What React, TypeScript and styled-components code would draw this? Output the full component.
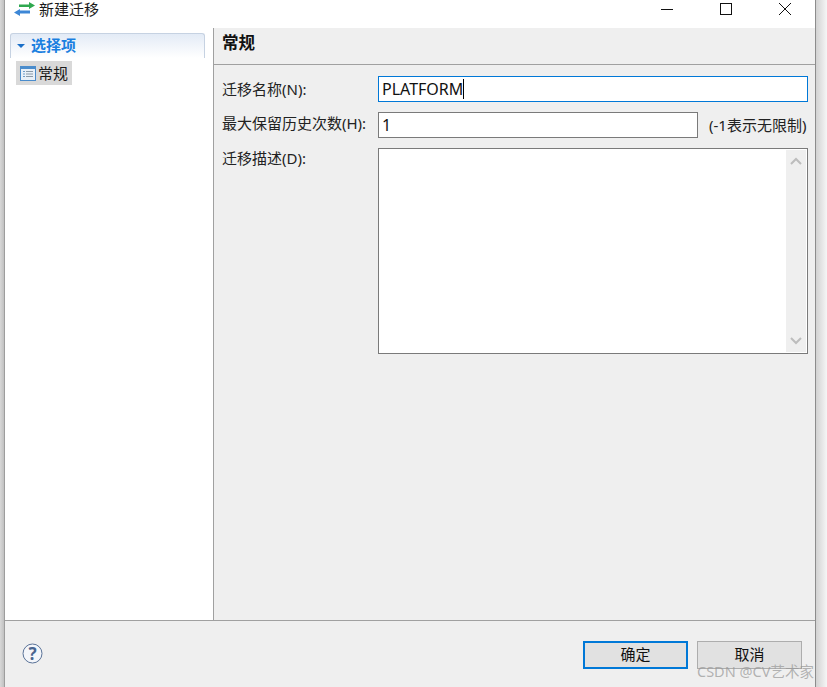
import styled, { createGlobalStyle } from "styled-components";

const fontStack = `"Noto Sans", "Noto Sans CJK SC", sans-serif`;

const GlobalStyle = createGlobalStyle`
	html, body {
		margin: 0;
		padding: 0;
		background: #fff;
	}
	* {
		box-sizing: border-box;
	}
`;

const Screen = styled.div`
	position: relative;
	width: 827px;
	height: 687px;
	overflow: hidden;
	display: flex;
	font-family: ${fontStack};
	font-size: 15px;
	color: #1a1a1a;
	background: #fff;
`;

const LeftEdge = styled.div`
	width: 5px;
	background: linear-gradient(to right, #d8d8d8, #c4c4c4 70%, #8a8a8a);
`;

const RightEdge = styled.div`
	width: 12px;
	background: linear-gradient(to right, #8c8c8c 0, #8c8c8c 1px, #d2d2d2 1px, #e6e6e6 60%, #f6f6f6);
`;

const Window = styled.div`
	flex: 1;
	display: flex;
	flex-direction: column;
	min-width: 0;
`;

const TitleBar = styled.div`
	height: 28px;
	display: flex;
	align-items: flex-start;
	background: #fff;
`;

const AppIcon = styled.svg`
	width: 21px;
	height: 14px;
	margin: 2px 0 0 9px;
`;

const Title = styled.span`
	margin: 0 0 0 4px;
	font-size: 15px;
	line-height: 18px;
`;

const WindowButtons = styled.div`
	margin-left: auto;
	display: flex;
	align-items: center;
	height: 18px;
`;

const WindowButton = styled.svg`
	width: 14px;
	height: 14px;
	margin-right: 45px;
	&:last-child {
		margin-right: 23px;
	}
`;

const Body = styled.div`
	flex: 1;
	display: flex;
	min-height: 0;
`;

const Sidebar = styled.aside`
	width: 209px;
	background: #fff;
	border-right: 1px solid #a0a0a0;
	padding: 5px 8px 0 5px;
`;

const SectionHeader = styled.div`
	height: 25px;
	display: flex;
	align-items: center;
	padding-bottom: 2px;
	border: 1px solid #c6d2e2;
	border-bottom: none;
	border-radius: 3px 3px 0 0;
	background: linear-gradient(to bottom, #e3ebf6, #ffffff);
	font-weight: 700;
	color: #1a7fe0;
	font-size: 15px;
	line-height: 22px;
`;

const Caret = styled.span`
	width: 0;
	height: 0;
	margin: 1px 6px 0 6px;
	border-left: 4px solid transparent;
	border-right: 4px solid transparent;
	border-top: 4px solid #1a6fc8;
`;

const TreeItem = styled.div`
	display: inline-flex;
	align-items: center;
	height: 24px;
	margin: 3px 0 0 6px;
	padding: 0 4px 0 4px;
	gap: 2px;
	background: #d9d9d9;
	font-size: 15px;
	line-height: 24px;
`;

const Main = styled.main`
	flex: 1;
	display: flex;
	flex-direction: column;
	background: #efefef;
	min-width: 0;
`;

const PageHeader = styled.div`
	height: 37px;
	padding: 4px 8px 0;
	border-bottom: 1px solid #a0a0a0;
	font-size: 16.5px;
	font-weight: 700;
	line-height: 22px;
	color: #111;
`;

const Form = styled.div`
	padding: 11px 7px 0 8px;
	display: flex;
	flex-direction: column;
	gap: 10px;
`;

const Row = styled.div`
	display: flex;
	align-items: flex-start;
`;

const Label = styled.label<{ $nudge?: number }>`
	width: 156px;
	flex: none;
	margin-top: ${(p) => p.$nudge ?? 0}px;
	line-height: 26px;
	font-size: 15px;
	color: #222;
	white-space: nowrap;
`;

const Field = styled.div<{ $focused?: boolean; $width: number }>`
	width: ${(p) => p.$width}px;
	height: 26px;
	flex: none;
	display: flex;
	align-items: center;
	padding-left: 3px;
	background: #fff;
	border: 1px solid ${(p) => (p.$focused ? "#0078d7" : "#7a7a7a")};
	font-size: 16px;
	color: #111;
`;

const Cursor = styled.span`
	width: 1px;
	height: 20px;
	background: #000;
`;

const Hint = styled.span`
	margin-left: 11px;
	line-height: 26px;
	font-size: 15px;
	color: #222;
	white-space: nowrap;
`;

const TextArea = styled.div`
	width: 430px;
	height: 206px;
	flex: none;
	display: flex;
	justify-content: flex-end;
	background: #fff;
	border: 1px solid #7a7a7a;
	padding: 1px;
`;

const ScrollBar = styled.div`
	width: 20px;
	display: flex;
	flex-direction: column;
	justify-content: space-between;
	align-items: center;
	background: #efefef;
	padding: 7px 0;
`;

const Arrow = styled.svg`
	width: 12px;
	height: 8px;
`;

const Footer = styled.div`
	height: 67px;
	flex: none;
	display: flex;
	align-items: flex-start;
	background: #efefef;
	border-top: 1px solid #a0a0a0;
	padding: 20px 13px 0 17px;
`;

const HelpIcon = styled.svg`
	width: 21px;
	height: 21px;
	margin-top: 2px;
`;

const Actions = styled.div`
	margin-left: auto;
	display: flex;
	gap: 9px;
`;

const Button = styled.button<{ $primary?: boolean }>`
	width: 105px;
	height: 28px;
	padding: 0 0 3px;
	background: #e1e1e1;
	border: ${(p) => (p.$primary ? "2px solid #0078d7" : "1px solid #adadad")};
	font-family: inherit;
	font-size: 15px;
	line-height: 16px;
	color: #111;
`;

const Watermark = styled.div`
	position: absolute;
	left: 697px;
	top: 663px;
	font-size: 14.5px;
	line-height: 16px;
	color: rgba(150, 150, 150, 0.7);
	white-space: nowrap;
`;

const ListIcon = () => (
	<svg width="16" height="15" viewBox="0 0 16 15">
		<rect x="0.5" y="0.5" width="15" height="14" fill="#e8f0f8" stroke="#4a8ccc" />
		<rect x="1" y="1" width="14" height="2" fill="#4a8ccc" />
		<path d="M3 5.5h2M3 8h2M3 10.5h2" stroke="#6f9cc8" />
		<path d="M6 5.5h7M6 8h7M6 10.5h7" stroke="#8a9aa8" />
	</svg>
);

export default function App() {
	return (
		<Screen>
			<GlobalStyle />
			<LeftEdge />
			<Window>
				<TitleBar>
					<AppIcon viewBox="0 0 21 14">
						<path d="M5 2.5h10V0l6 3.5L15 7V5H5z" fill="#2fa84f" />
						<path d="M16 8.500H6V7L0 10.500 6 14v-2.500h10z" fill="#3d87d6" />
					</AppIcon>
					<Title>新建迁移</Title>
					<WindowButtons>
						<WindowButton viewBox="0 0 14 14">
							<path d="M1 7.500h12" stroke="#111" />
						</WindowButton>
						<WindowButton viewBox="0 0 14 14">
							<rect x="1.500" y="1.500" width="11" height="11" fill="none" stroke="#111" />
						</WindowButton>
						<WindowButton viewBox="0 0 14 14">
							<path d="M1 1l12 12M13 1L1 13" stroke="#111" />
						</WindowButton>
					</WindowButtons>
				</TitleBar>
				<Body>
					<Sidebar>
						<SectionHeader>
							<Caret />
							选择项
						</SectionHeader>
						<TreeItem>
							<ListIcon />
							常规
						</TreeItem>
					</Sidebar>
					<Main>
						<PageHeader>常规</PageHeader>
						<Form>
							<Row>
								<Label>迁移名称(N):</Label>
								<Field $focused $width={430}>
									PLATFORM
									<Cursor />
								</Field>
							</Row>
							<Row>
								<Label $nudge={-2}>最大保留历史次数(H):</Label>
								<Field $width={320}>1</Field>
								<Hint>(-1表示无限制)</Hint>
							</Row>
							<Row>
								<Label $nudge={-3}>迁移描述(D):</Label>
								<TextArea>
									<ScrollBar>
										<Arrow viewBox="0 0 12 8">
											<path d="M1 7l5-5 5 5" fill="none" stroke="#bdbdbd" strokeWidth="2" />
										</Arrow>
										<Arrow viewBox="0 0 12 8">
											<path d="M1 1l5 5 5-5" fill="none" stroke="#bdbdbd" strokeWidth="2" />
										</Arrow>
									</ScrollBar>
								</TextArea>
							</Row>
						</Form>
					</Main>
				</Body>
				<Footer>
					<HelpIcon viewBox="0 0 21 21">
						<circle cx="10.500" cy="10.500" r="9.500" fill="#f4f6fa" stroke="#5a7398" />
						<text x="10.500" y="16.500" textAnchor="middle" fontSize="17" fontWeight="700" fill="#4a6590">?</text>
					</HelpIcon>
					<Actions>
						<Button $primary>确定</Button>
						<Button>取消</Button>
					</Actions>
				</Footer>
			</Window>
			<RightEdge />
			<Watermark>CSDN @CV艺术家</Watermark>
		</Screen>
	);
}
